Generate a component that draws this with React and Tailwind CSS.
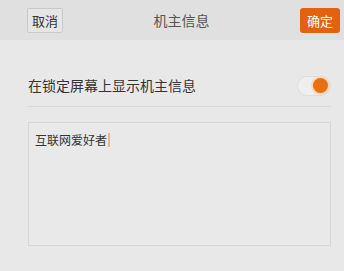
export default function App() {
    const font = { fontFamily: '"Noto Sans CJK SC", "Noto Sans", sans-serif' };
    return (
        <div className="w-[344px] h-[271px] bg-[#e8e8e8] flex flex-col" style={font}>
            {/* Top bar */}
            <div className="h-[40px] bg-[#e0e0e0] flex items-center justify-between pl-[27px] pr-[4px]">
                <button className="w-[36px] h-[25px] border border-[#c9c9c9] bg-[#e6e6e6] text-[13px] leading-none text-[#333] rounded-[2px] flex items-center justify-center">
                    取消
                </button>
                <div className="text-[14px] text-[#555]">机主信息</div>
                <button className="w-[40px] h-[25px] bg-[#e2620e] text-[13px] leading-none text-white rounded-[3px] flex items-center justify-center">
                    确定
                </button>
            </div>

            {/* Toggle row */}
            <div className="ml-[28px] mr-[13px] mt-[25px] h-[42px] flex items-center justify-between border-b border-[#d8d8d8]">
                <span className="text-[14px] text-[#333]">在锁定屏幕上显示机主信息</span>
                <div className="w-[34px] h-[20px] rounded-full bg-[#efefef] border border-[#dcdcdc] flex items-center justify-end pr-[2px]">
                    <div className="w-[15px] h-[15px] rounded-full bg-[#e8700f] ring-2 ring-[#f6d7bd]" />
                </div>
            </div>

            {/* Text area */}
            <div className="ml-[28px] mr-[13px] mt-[15px] h-[124px] border border-[#d6d6d6] bg-[#e9e9e9] px-[6px] py-[8px]">
                <div className="flex items-center text-[12px] text-[#333]">
                    互联网爱好者
                    <span className="w-[2px] h-[14px] bg-[#e7b98a] ml-[1px]" />
                </div>
            </div>
        </div>
    );
}
